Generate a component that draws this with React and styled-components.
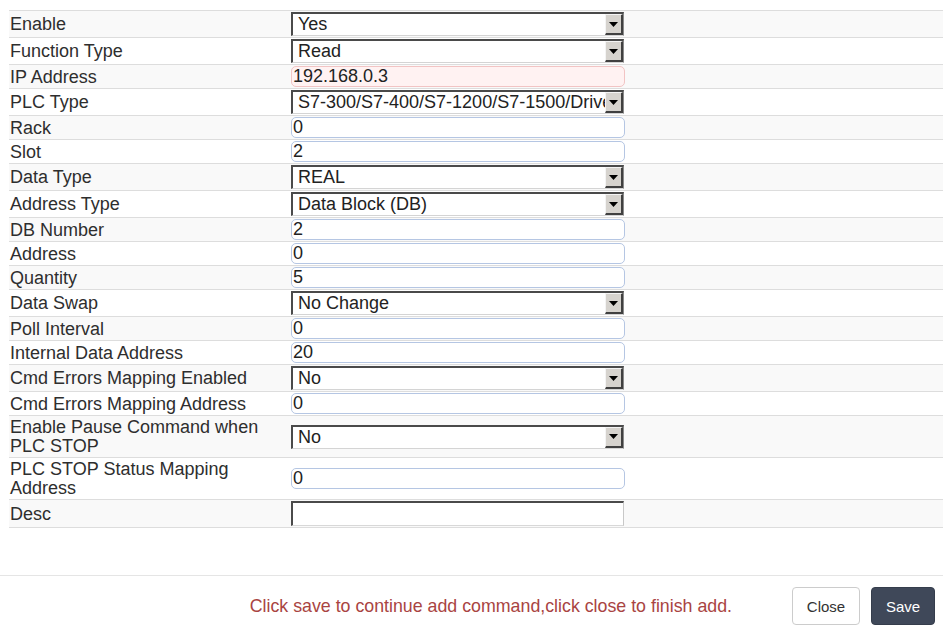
import React from "react";
import styled, { createGlobalStyle } from "styled-components";

const GlobalStyle = createGlobalStyle`
  html, body {
    margin: 0;
    padding: 0;
    background: #ffffff;
  }
  body {
    font-family: "Liberation Sans", Arial, sans-serif;
    font-size: 18px;
    color: #333333;
  }
`;

const rows = [
  { label: "Enable", kind: "select", value: "Yes" },
  { label: "Function Type", kind: "select", value: "Read" },
  { label: "IP Address", kind: "input", value: "192.168.0.3", error: true },
  { label: "PLC Type", kind: "select", value: "S7-300/S7-400/S7-1200/S7-1500/Drives" },
  { label: "Rack", kind: "input", value: "0" },
  { label: "Slot", kind: "input", value: "2" },
  { label: "Data Type", kind: "select", value: "REAL" },
  { label: "Address Type", kind: "select", value: "Data Block (DB)" },
  { label: "DB Number", kind: "input", value: "2" },
  { label: "Address", kind: "input", value: "0" },
  { label: "Quantity", kind: "input", value: "5" },
  { label: "Data Swap", kind: "select", value: "No Change" },
  { label: "Poll Interval", kind: "input", value: "0" },
  { label: "Internal Data Address", kind: "input", value: "20" },
  { label: "Cmd Errors Mapping Enabled", kind: "select", value: "No" },
  { label: "Cmd Errors Mapping Address", kind: "input", value: "0" },
  { label: "Enable Pause Command when PLC STOP", kind: "select", value: "No" },
  { label: "PLC STOP Status Mapping Address", kind: "input", value: "0" },
  { label: "Desc", kind: "plain", value: "" },
];

const Field = ({ row }) => {
  if (row.kind === "select") {
    return (
      <SelectBox>
        <SelectText>{row.value}</SelectText>
        <ArrowButton>
          <svg width="9" height="5" viewBox="0 0 9 5">
            <path d="M0 0 H9 L4.5 5 Z" fill="#000" />
          </svg>
        </ArrowButton>
      </SelectBox>
    );
  }
  if (row.kind === "plain") {
    return <PlainInput defaultValue={row.value} />;
  }
  return <TextInput defaultValue={row.value} $error={row.error} />;
};

export default function App() {
  return (
    <Page>
      <GlobalStyle />
      <FormTable>
        {rows.map((row, i) => (
          <Row key={row.label} $striped={i % 2 === 0}>
            <Label>{row.label}</Label>
            <ValueCell>
              <Field row={row} />
            </ValueCell>
          </Row>
        ))}
      </FormTable>
      <Footer>
        <Message>Click save to continue add command,click close to finish add.</Message>
        <CloseButton>Close</CloseButton>
        <SaveButton>Save</SaveButton>
      </Footer>
    </Page>
  );
}

const Page = styled.div`
  width: 943px;
  height: 637px;
  display: flex;
  flex-direction: column;
  padding-top: 10px;
  box-sizing: border-box;
  overflow: hidden;
`;

const FormTable = styled.div`
  display: flex;
  flex-direction: column;
  margin-left: 9px;
  border-bottom: 1px solid #dddddd;
`;

const Row = styled.div`
  display: grid;
  grid-template-columns: 281px 1fr;
  border-top: 1px solid #dddddd;
  background: ${(p) => (p.$striped ? "#f9f9f9" : "#ffffff")};
`;

const Label = styled.div`
  display: flex;
  align-items: center;
  padding: 2px 12px 1px 1px;
  font-size: 18px;
  line-height: 19px;
  color: #2e2e2e;
`;

const ValueCell = styled.div`
  display: flex;
  align-items: center;
  padding: 1px 0 1px 1px;
`;

const SelectBox = styled.div`
  width: 333px;
  height: 24px;
  box-sizing: border-box;
  display: flex;
  align-items: center;
  position: relative;
  background: #ffffff;
  border-top: 2px solid #4a4a4a;
  border-left: 2px solid #4a4a4a;
  border-right: 1px solid #8a8a8a;
  border-bottom: 1px solid #d4d4d4;
  overflow: hidden;
`;

const SelectText = styled.span`
  padding-left: 5px;
  font-size: 18px;
  color: #222222;
  white-space: nowrap;
`;

const ArrowButton = styled.span`
  position: absolute;
  right: 0;
  top: 0;
  width: 18px;
  height: 21px;
  box-sizing: border-box;
  display: flex;
  align-items: center;
  justify-content: center;
  background: #d6d3ce;
  border-top: 1px solid #f4f4f4;
  border-left: 1px solid #f4f4f4;
  border-right: 2px solid #404040;
  border-bottom: 2px solid #404040;
`;

const TextInput = styled.input`
  width: 334px;
  height: 21px;
  box-sizing: border-box;
  margin: 0;
  padding: 0 1px;
  font-family: "Liberation Sans", Arial, sans-serif;
  font-size: 18px;
  color: #222222;
  background: ${(p) => (p.$error ? "#fff2f2" : "#ffffff")};
  border: 1px solid ${(p) => (p.$error ? "#f2c4c4" : "#b5c6e3")};
  border-radius: 5px;
  outline: none;
`;

const PlainInput = styled.input`
  width: 333px;
  height: 25px;
  box-sizing: border-box;
  margin: 0;
  padding: 0 2px;
  font-family: "Liberation Sans", Arial, sans-serif;
  font-size: 18px;
  background: #ffffff;
  border-top: 2px solid #4a4a4a;
  border-left: 2px solid #4a4a4a;
  border-right: 1px solid #c8c8c8;
  border-bottom: 1px solid #d8d8d8;
  outline: none;
`;

const Footer = styled.div`
  margin-top: 47px;
  border-top: 1px solid #e5e5e5;
  display: flex;
  justify-content: flex-end;
  align-items: center;
  padding: 11px 8px 0 0;
`;

const Message = styled.span`
  color: #a94442;
  font-size: 17.8px;
  margin-right: 60px;
  white-space: nowrap;
`;

const BaseButton = styled.button`
  height: 38px;
  box-sizing: border-box;
  padding: 0 12px;
  font-family: "Liberation Sans", Arial, sans-serif;
  font-size: 15px;
  border-radius: 4px;
  cursor: pointer;
`;

const CloseButton = styled(BaseButton)`
  width: 68px;
  background: #ffffff;
  color: #333333;
  border: 1px solid #cccccc;
`;

const SaveButton = styled(BaseButton)`
  width: 64px;
  margin-left: 11px;
  background: #3f4859;
  color: #ffffff;
  border: 1px solid #353d4c;
`;
